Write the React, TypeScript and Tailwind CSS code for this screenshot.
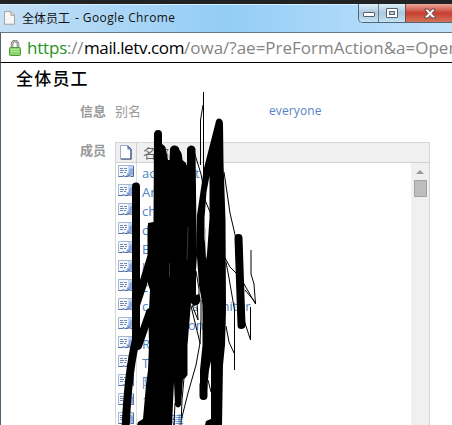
import React from "react";

const members: [string, string, string][] = [
  ["ac", "t", "w-[53px]"], ["An", "", ""], ["ch", "", ""], ["c", "n", "w-[58px]"], ["E", "", ""],
  ["l", "", ""], ["c", "", ""], ["c", "s monitor", "w-[50px]"], ["s", "onsult", "w-[46px]"],
  ["R", "", ""], ["T", "", ""], ["阿", "", ""], ["1", "", ""], ["", "建", "w-[29px]"],
];

function PageIcon({ className }: { className: string }) {
  return (
    <svg className={className} viewBox="0 0 12 15">
      <path d="M.5.5h7.2l3.8 3.8v10H.5z" fill="#f7f7f7" stroke="#999" />
      <path d="M7.5.8v3.7h3.7" fill="#ddd" stroke="#999" />
    </svg>
  );
}

function HeaderPageIcon() {
  return (
    <svg className="h-[15px] w-[12px]" viewBox="0 0 12 15">
      <path d="M.5.5h6.800l3.700 3.700v10H.5z" fill="#fff" stroke="#9aaccb" />
      <path d="M1 14h10V4.500L7.500.8" fill="none" stroke="#314d79" strokeWidth="1.200" />
      <path d="M7.400 1v3.500H11z" fill="#6c8dc4" />
    </svg>
  );
}

function CardIcon() {
  return (
    <svg className="mb-[2px] h-[13px] w-4" viewBox="0 0 16 13">
      <path d="M.5.5h15v11H.5z" fill="#f6f9ff" stroke="#a3b6d3" />
      <path d="M10 1h5v10h-5z" fill="#c9d9f4" />
      <path d="m8 11 1.500-3 1.500-.5V5l2-2 2 1v7l-2-1.500L11 11z" fill="#8eaade" />
      <path d="M15.500 1v10.500H13l-1.500-1.500-2 1.500H7l-1-1-2 1H.5" fill="none" stroke="#536e9d" />
      <path d="M2 3.500h3m1 0h3M2 5.500h4m1 0h2M2 7.500h3m1 0h2" stroke="#7187ac" />
    </svg>
  );
}

function Scribble() {
  return (
    <svg className="pointer-events-none absolute left-0 top-0 h-[425px] w-[452px]" viewBox="0 0 452 425">
      <g fill="none" stroke="#000" strokeWidth="8" strokeLinecap="round" strokeLinejoin="round">
        <path d="M136 186.500V345M151.500 227V256L143 284L136 305M150 312L138 346M136 340Q128 372 125.500 430" />
        <path d="M203.500 385V396M238.500 238L241.500 325" />
      </g>
      <path d="M154 134Q154.500 130 158 130Q162 130 162 134V144Q166 146 166 150L168 160H169.500L170 149Q171 145 175 145.500Q179 146 179.500 150Q182 152 182.500 160Q186 162 187 166V149Q188 145.500 191.500 145.500Q195.500 146 195.500 150L196.500 230L197 255L196 270V295L199 294Q202 298 199 304L194 306L191 303L190 315L187.500 345V375Q186 378 183 379L181 405Q178 410 175 405L174 382L172 425H137L138 422L143 419L146 385L148 370L149 345L148.500 320L150 290L148 284V223L153.500 222Z" />
      <path d="M215.500 123Q216 118.500 219 118.500Q223 119 223 124L223.500 163L225.500 220L226 310L225 345L223 365L222 425H205L206 421L211 419V361L209 370L207 390H200L200 370L202.500 345V305L199 285L196.500 250V235L197 215L204 168Z" />
      <path d="M209.500 176L206.500 192L204.500 218V238L206.500 260L208 240L209.500 218Z" fill="#fff" />
      <g fill="none" stroke="#000" strokeWidth="1">
        <path d="M203.500 92V187M203 105L200.500 120V165" />
        <path d="M194.500 153L201 174L203 185M205 200L210 212M224 172L230 213L236 239" />
        <path d="M226 262L229 278L234.500 310V370M225 258L230 267L240 277L255.500 304L254 284L251 274V250" />
        <path d="M245 290L256 303M250.500 307V340L244 320M226 326L229 342L234 353" />
        <path d="M196 271L199 289V300M191 306L200 343L196 365L188 393L182 417" />
        <path d="M201 300V318L200 344M192 305L198 320L197 302" />
        <path d="M184 378L182 400L181 425M175 403L174 425M208 380L211 392" />
      </g>
      <path d="M205.500 228V257M188 227L187 260M169.500 263V277" stroke="#888" strokeWidth=".4" />
    </svg>
  );
}

export default function App() {
  return (
    <main className="relative h-[425px] w-[452px] overflow-hidden bg-white font-['Open_Sans','Noto_Sans_CJK_SC',sans-serif]">
      <div className="h-1 bg-[#202224]" />
      <header className="flex h-7 justify-between bg-gradient-to-r from-[#c4dff5] via-[#93cdf6] to-[#c2e2fb] shadow-[inset_0_1px_0_#d8efff]">
        <div className="flex items-center pl-1 text-[12px] text-[#111]">
          <PageIcon className="mr-[7px] h-[14px] w-[11px]" />
          <span className="font-['Noto_Sans_CJK_SC',sans-serif]">全体员工</span>
          <span className="ml-[5px] whitespace-nowrap tracking-[0.4px]">- Google Chrome</span>
        </div>
        <div className="flex h-[19px] w-[94px] overflow-hidden rounded-bl-[5px] border-b border-l border-[#526678]">
          <div className="flex w-[28px] items-center justify-center border-r border-[#657b8d] bg-gradient-to-b from-[#deeffa] via-[#abc8dd] to-[#c5e3f6]">
            <div className="mt-[3px] h-[5px] w-3 rounded-[1px] border border-[#52616d] bg-white" />
          </div>
          <div className="flex w-[27px] shrink-0 items-center justify-center border-r border-[#6c5057] bg-gradient-to-b from-[#deeffa] via-[#abc8dd] to-[#c5e3f6]">
            <div className="flex h-[10px] w-3 items-center justify-center rounded-[1px] border border-[#52616d] bg-white">
              <div className="h-1 w-[6px] border border-[#52616d] bg-[#b7d1e2]" />
            </div>
          </div>
          <div className="flex w-[46px] shrink-0 items-center bg-gradient-to-b from-[#e7a59a] via-[#c63d31] to-[#d37256] pl-[18px]">
            <svg className="h-[11px] w-3" viewBox="0 0 12 11">
              <path d="M1 1h3l2 2.500L8 1h3v1L8 5.500l3 3V10H8L6 7.500 4 10H1V8.500l3-3L1 2z" fill="#fff" stroke="#604449" />
            </svg>
          </div>
        </div>
      </header>
      <div className="flex h-[31px] items-center overflow-hidden border-b border-l border-t border-b-black border-l-[#536273] border-t-[#68798a] pl-[8px]">
        <svg className="mr-[6px] h-4 w-3 shrink-0" viewBox="0 0 12 16">
          <path d="M3 8V4a3 3 0 0 1 6 0v4" fill="none" stroke="#777" strokeWidth="2.500" />
          <path d="M3 8V4a3 3 0 0 1 6 0v4" fill="none" stroke="#ccc" />
          <rect x=".5" y="7.500" width="11" height="8" rx="1" fill="#8bd46d" stroke="#4b9a35" />
          <path d="M2 9.500h8m-8 2h8" stroke="#b1e89b" />
        </svg>
        <div className="flex whitespace-nowrap text-[17px] leading-6 text-[#858585]">
          <span className="w-[57px] tracking-[-0.2px]"><span className="text-[#259323]">https</span>://</span>
          <span className="w-[100px] tracking-[-0.4px] text-black">mail.letv.com</span>
          <span>/owa/?ae=PreFormAction&amp;a=Open</span>
        </div>
      </div>
      <section className="h-[362px] border-l border-[#536273]">
        <h1 className="h-[34px] pl-[15px] pt-[3px] font-['Noto_Sans_CJK_SC',sans-serif] text-[17px] font-medium leading-6 tracking-[1.2px] text-black">全体员工</h1>
        <div className="flex h-[45px] pt-[3px] text-[12px] leading-[22px] text-[#999]">
          <b className="ml-[79px] w-[27px] shrink-0 text-[13px]">信息</b>
          <span className="ml-[8px] w-[154px] text-[13px]">别名</span>
          <span className="tracking-[0.1px] text-[#5684c4]">everyone</span>
        </div>
        <div className="flex">
          <b className="ml-[79px] w-[35px] shrink-0 text-[13px] leading-[17px] text-[#999]">成员</b>
          <div className="h-[300px] w-[315px] border border-[#d5d5d5] text-[12px]">
            <div className="flex h-5 items-center border-b border-[#d0d0d0] bg-[#f0f0f0]">
              <div className="flex h-full w-[21px] items-center justify-center border-r border-[#d0d0d0]"><HeaderPageIcon /></div>
              <span className="pl-[6px] text-[13px] leading-5 text-[#666]">名称</span>
            </div>
            <div className="flex h-[280px]">
              <div className="w-[295px]">
                {members.map(([start, end, width], i) => (
                  <div className="flex h-[19px] items-center" key={i}>
                    <div className="flex h-full w-[21px] items-center justify-center border-r border-[#ddd]"><CardIcon /></div>
                    <div className="flex whitespace-nowrap pl-[5px] pt-px text-[13px] leading-[18px] text-[#4d82c4]">
                      <span className={width}>{start}</span><span>{end}</span>
                    </div>
                  </div>
                ))}
              </div>
              <div className="flex w-[18px] flex-col items-center bg-[#f0f0f0] pt-[7px]">
                <div className="h-0 w-0 border-x-4 border-b-4 border-x-transparent border-b-[#999]" />
                <div className="mt-[6px] h-[17px] w-[13px] border border-[#a2a2a2] bg-[#bdbdbd]" />
              </div>
            </div>
          </div>
        </div>
      </section>
      <Scribble />
    </main>
  );
}
